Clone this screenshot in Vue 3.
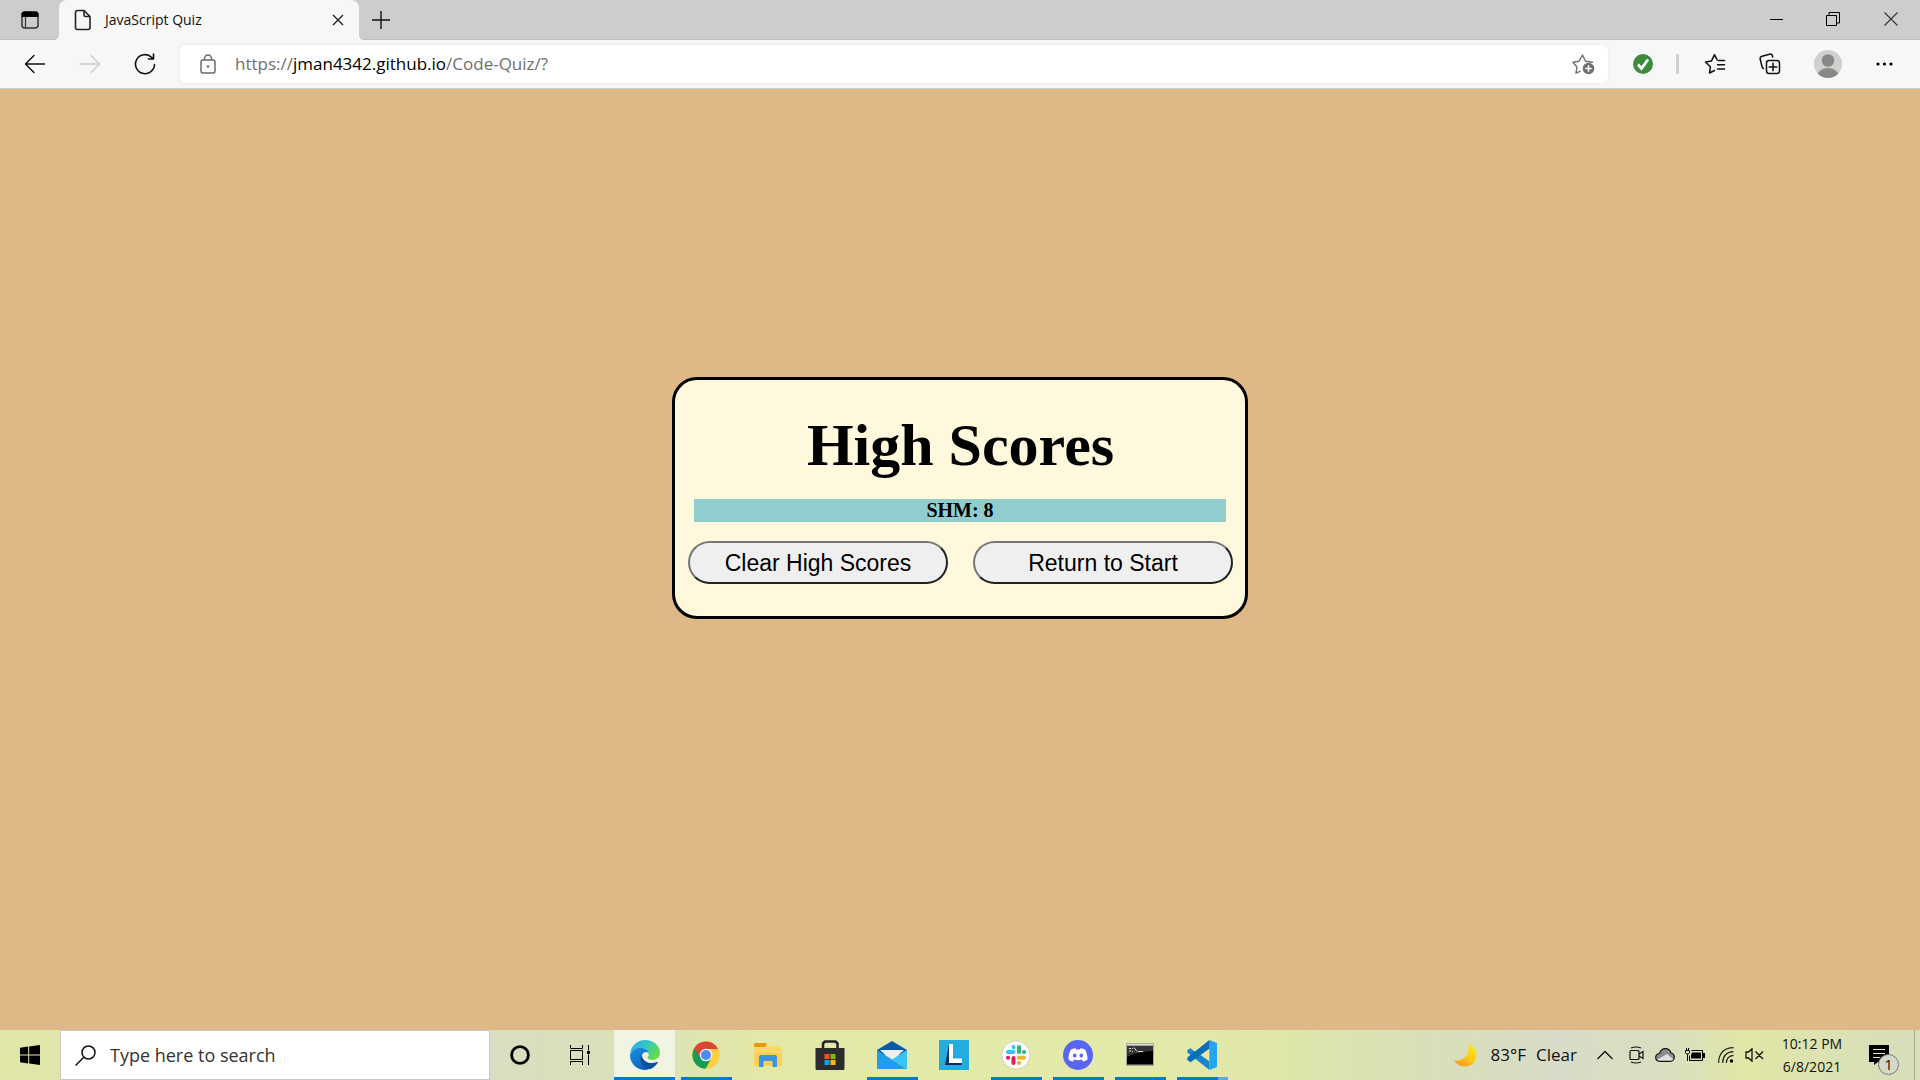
<script setup>
import { ref } from 'vue'

const search = ref('')
const scores = [{ name: 'SHM', score: 8 }]
const apps = [
  { id: 'edge', label: 'Microsoft Edge', state: 'active' },
  { id: 'chrome', label: 'Google Chrome', state: 'open' },
  { id: 'files', label: 'File Explorer', state: '' },
  { id: 'store', label: 'Microsoft Store', state: '' },
  { id: 'mail', label: 'Mail', state: 'open' },
  { id: 'letter', label: 'L', state: '' },
  { id: 'slack', label: 'Slack', state: 'open' },
  { id: 'discord', label: 'Discord', state: 'open' },
  { id: 'cmd', label: 'Command Prompt', state: 'open' },
  { id: 'code', label: 'Visual Studio Code', state: 'open multi' },
]
</script>

<template>
  <div class="desktop">
    <header class="tabstrip">
      <button class="tab-actions" aria-label="Tab actions">
        <svg width="20" height="20" viewBox="0 0 20 20">
          <rect x="2" y="2" width="16" height="16" rx="3" fill="none" stroke="#333" stroke-width="1.5" />
          <path d="M1.500 7V4.500a3 3 0 0 1 3-3h11a3 3 0 0 1 3 3V7z" fill="#000" />
          <path d="M5.500 7v11" stroke="#333" stroke-width="1.200" />
        </svg>
      </button>
      <div class="tab">
        <svg width="18" height="22" viewBox="0 0 18 22" fill="none" stroke="#222" stroke-width="1.600" stroke-linejoin="round">
          <path d="M3.500 1.500h6.500l6 6v11a2 2 0 0 1-2 2H3.500a2 2 0 0 1-2-2v-15a2 2 0 0 1 2-2z" />
          <path d="M10 1.500V6a1.500 1.500 0 0 0 1.500 1.500H16" />
        </svg>
        <span class="tab-title">JavaScript Quiz</span>
        <button class="tab-close" aria-label="Close tab">
          <svg width="12" height="12" viewBox="0 0 12 12" stroke="#222" stroke-width="1.400"><path d="M1 1l10 10M11 1L1 11" /></svg>
        </button>
      </div>
      <button class="new-tab" aria-label="New tab">
        <svg width="18" height="18" viewBox="0 0 18 18" stroke="#111" stroke-width="1.400"><path d="M9 0v18M0 9h18" /></svg>
      </button>
      <div class="window-controls">
        <button class="minimize" aria-label="Minimize"><svg width="14" height="14" viewBox="0 0 14 14"><path d="M0 7.500h13" stroke="#000" /></svg></button>
        <button aria-label="Restore">
          <svg width="14" height="14" viewBox="0 0 14 14" fill="none" stroke="#000"><path d="M.5 3.500h10v10H.5zM3 3.500V.500h10.500V11h-3" /></svg>
        </button>
        <button aria-label="Close"><svg width="14" height="14" viewBox="0 0 14 14" stroke="#333" stroke-width="1.100"><path d="M.5.5l13 13M13.500.500l-13 13" /></svg></button>
      </div>
    </header>

    <nav class="toolbar">
      <button class="nav-button" aria-label="Back">
        <svg width="22" height="20" viewBox="0 0 22 20" fill="none" stroke="#111" stroke-width="1.500" stroke-linecap="round" stroke-linejoin="round"><path d="M20.500 10H1.500M10 1.500L1.500 10l8.500 8.500" /></svg>
      </button>
      <button class="nav-button" aria-label="Forward">
        <svg width="22" height="20" viewBox="0 0 22 20" fill="none" stroke="#ccc" stroke-width="1.500" stroke-linecap="round" stroke-linejoin="round"><path d="M1 10h19.500M12 1.500l8.500 8.500-8.500 8.500" /></svg>
      </button>
      <button class="nav-button" aria-label="Refresh">
        <svg width="22" height="22" viewBox="0 0 22 22" fill="none" stroke="#111" stroke-width="1.600" stroke-linecap="round" stroke-linejoin="round"><path d="M20.500 11.500A9.500 9.500 0 1 1 17.600 4.300L19.500 6M19.500 1v5h-5" /></svg>
      </button>
      <div class="address">
        <svg width="16" height="20" viewBox="0 0 16 20" fill="none" stroke="#6b6b6b" stroke-width="1.500">
          <rect x="1" y="6" width="14" height="13" rx="2" />
          <path d="M4.500 6V4.500a3.500 3.500 0 0 1 7 0V6" />
          <circle cx="8" cy="12.500" r="1.300" fill="#6b6b6b" stroke="none" />
        </svg>
        <a class="url" href="#">https://<b>jman4342.github.io</b>/Code-Quiz/?</a>
        <button aria-label="Add to favorites">
          <svg width="24" height="22" viewBox="0 0 24 22">
            <path d="M8 18.300l-4 1.900 .9-6.200L1 9.200l5.900-.9L10.500 2l3.100 6.300 6.900.9" fill="none" stroke="#707070" stroke-width="1.400" stroke-linejoin="round" stroke-linecap="round" />
            <circle cx="16.500" cy="15.500" r="5.800" fill="#6f6f6f" />
            <path d="M16.500 12.300v6.400M13.300 15.500h6.400" stroke="#fff" stroke-width="1.500" />
          </svg>
        </button>
      </div>
      <div class="tools">
        <button class="tool-extension" aria-label="Extension">
          <svg width="20" height="20" viewBox="0 0 20 20"><circle cx="10" cy="10" r="10" fill="#3d8b3d" /><path d="M5 10.500l3.500 4L15 5.500" fill="none" stroke="#fff" stroke-width="2.800" /></svg>
        </button>
        <span class="separator"></span>
        <button class="tool-favorites" aria-label="Favorites">
          <svg width="22" height="22" viewBox="0 0 22 22" fill="none" stroke="#111" stroke-width="1.500" stroke-linecap="round" stroke-linejoin="round">
            <path d="M10.500 17.500L5.500 20l.9-6.200L1.500 9l5.900-.9L10.500 1.700l2.600 5.100M14.500 7.500h6M13.500 11.800h7M13.500 16h7" />
          </svg>
        </button>
        <button class="tool-collections" aria-label="Collections">
          <svg width="22" height="22" viewBox="0 0 22 22" fill="none" stroke="#111" stroke-width="1.500" stroke-linecap="round">
            <path d="M4.500 15.500a3 3 0 0 1-1.500-2L1.200 6.200a2.500 2.500 0 0 1 1.800-3l7.500-2a2.500 2.500 0 0 1 3 1.800l.2 1" />
            <rect x="7.500" y="7.500" width="13" height="13" rx="2.500" /><path d="M14 10.200v7.600M10.200 14h7.600" />
          </svg>
        </button>
        <button class="tool-profile" aria-label="Profile">
          <svg width="28" height="28" viewBox="0 0 28 28">
            <clipPath id="avatar"><circle cx="14" cy="14" r="14" /></clipPath>
            <g clip-path="url(#avatar)"><path d="M0 0h28v28H0z" fill="#d2d0ce" /><circle cx="14" cy="10.500" r="6.300" fill="#8a8886" /><ellipse cx="14" cy="26" rx="10.500" ry="8" fill="#8a8886" /></g>
          </svg>
        </button>
        <button class="tool-more" aria-label="Settings and more">
          <svg width="17" height="4" viewBox="0 0 17 4"><circle cx="2" cy="2" r="1.600" /><circle cx="8.500" cy="2" r="1.600" /><circle cx="15" cy="2" r="1.600" /></svg>
        </button>
      </div>
    </nav>

    <main class="page">
      <section class="card">
        <h1>High Scores</h1>
        <ul class="scores">
          <li v-for="s in scores" :key="s.name">{{ s.name }}: {{ s.score }}</li>
        </ul>
        <div class="actions">
          <button>Clear High Scores</button>
          <button>Return to Start</button>
        </div>
      </section>
    </main>

    <footer class="taskbar">
      <button class="start" aria-label="Start">
        <svg width="20" height="20" viewBox="0 0 20 20"><path d="M0 2.700L8.200 1.600V9.500H0zM9.200 1.400L20 0v9.500H9.200zM0 10.500h8.200v7.900L0 17.300zM9.200 10.500H20V20L9.200 18.500z" /></svg>
      </button>
      <label class="search">
        <svg width="21" height="21" viewBox="0 0 21 21" fill="none" stroke="#111" stroke-width="1.500"><circle cx="13.500" cy="7.500" r="6.500" /><path d="M9 12L.5 20.500" /></svg>
        <input v-model="search" type="text" placeholder="Type here to search" aria-label="Search" />
      </label>
      <button class="shell" aria-label="Cortana">
        <svg width="20" height="20" viewBox="0 0 20 20"><circle cx="10" cy="10" r="8.400" fill="none" stroke="#000" stroke-width="2.800" /></svg>
      </button>
      <button class="shell" aria-label="Task View">
        <svg width="22" height="20" viewBox="0 0 22 20" fill="none" stroke="#000">
          <path d="M1.500 5.500h12v9h-12zM1.500 0v3.500h12V0M1.500 20v-3.500h12V20M19.500 0v5.500M19.500 9.500V20" /><path d="M18 6h3v3h-3z" fill="#000" stroke="none" />
        </svg>
      </button>

      <button v-for="app in apps" :key="app.id" :class="['app', app.state]" :aria-label="app.label">
        <svg v-if="app.id === 'edge'" width="30" height="30" viewBox="0 0 30 30">
          <defs>
            <linearGradient id="edge-top" x1="0" y1="0" x2="1" y2=".5"><stop offset="0" stop-color="#2aaef0" /><stop offset=".5" stop-color="#2fc4c9" /><stop offset="1" stop-color="#63dc4c" /></linearGradient>
            <linearGradient id="edge-side" x1="0" y1="0" x2=".6" y2="1"><stop offset="0" stop-color="#1a8fe3" /><stop offset="1" stop-color="#0a63bf" /></linearGradient>
          </defs>
          <path d="M.3 13C1.300 5.500 7.500 0 15 0c8.500 0 15 6 15 12.500 0 4.700-3.500 7.500-7.500 7.500-3.300 0-5-1-5-2.200 0-.8 1.300-1.500 1.300-3.600 0-3-3.300-6-8-6C6 8.200 2 10.500.3 13z" fill="url(#edge-top)" />
          <path d="M.1 14.500C1.500 10.500 5.500 8 10.500 8c4.500 0 8.300 2.600 8.300 6-1-2-3-2.300-4.600-1.500C11.500 14 11 17.500 12.500 21c1.500 4 6 6.200 10 5.300C20 29 17.500 30 15 30 6.500 30-.5 23 .1 14.500z" fill="url(#edge-side)" />
          <path d="M11.500 15c-3 6 .5 13.500 8 14.300 4-1.300 6.500-3.800 8.200-6.600.3-.6-.3-1-.9-.7-5.500 2.600-13.500.8-15.300-7z" fill="#0c4f9c" />
        </svg>
        <svg v-else-if="app.id === 'chrome'" width="28" height="28" viewBox="0 0 28 28">
          <circle cx="14" cy="14" r="13.700" fill="#ffcd40" />
          <path d="M14 14L2.100 7.200A13.700 13.700 0 0 0 13.500 27.700L19.500 17z" fill="#169b58" />
          <path d="M14 14L8.600 17.200 2.100 7.200A13.700 13.700 0 0 1 26 8H14z" fill="#db4437" />
          <circle cx="14" cy="14" r="6.300" fill="#f5f5f5" /><circle cx="14" cy="14" r="5" fill="#4c8bf5" />
        </svg>
        <svg v-else-if="app.id === 'files'" width="28" height="24" viewBox="0 0 28 24">
          <path d="M0 2a1 1 0 0 1 1-1h11l2 2h13.500v20H0z" fill="#ffd867" /><path d="M0 1.500A1.500 1.500 0 0 1 1.500 0H12l1 1-2 3H0z" fill="#df9b08" />
          <path d="M0 10h28v13H0z" fill="#ffce52" /><path d="M5 14a2 2 0 0 1 2-2h14a2 2 0 0 1 2 2v10h-4.500v-6h-9v6H5z" fill="#3996dc" />
        </svg>
        <svg v-else-if="app.id === 'store'" width="30" height="30" viewBox="0 0 30 30">
          <path d="M8 10V3.500l2-2h10.500l2 2V10" fill="none" stroke="#222" stroke-width="2.500" stroke-linejoin="round" /><path d="M.5 8h29v20.500A1.500 1.500 0 0 1 28 30H2a1.500 1.500 0 0 1-1.500-1.500z" fill="#2c2c2c" />
          <path d="M9.500 14h5v5h-5z" fill="#f25022" /><path d="M15.500 14h5v5h-5z" fill="#7fba00" /><path d="M9.500 20h5v5h-5z" fill="#00a4ef" /><path d="M15.500 20h5v5h-5z" fill="#ffb900" />
        </svg>
        <svg v-else-if="app.id === 'mail'" width="30" height="28" viewBox="0 0 30 28">
          <path d="M0 9L15 0l15 9v5H0z" fill="#0a5aa8" /><path d="M3 9h24l-12 11z" fill="#f0f0f0" />
          <path d="M0 9l15 9.500L30 28H0z" fill="#1f9fe8" /><path d="M30 9L15 18.500 30 28z" fill="#38c3f5" />
        </svg>
        <svg v-else-if="app.id === 'letter'" width="30" height="30" viewBox="0 0 30 30">
          <path d="M0 0h30v30H0z" fill="#25abdc" /><path d="M10 4.500v18.500h13l-.5 2H6z" fill="#0b2f5e" /><path d="M10 4h4v14.500h9V23H10z" fill="#fff" />
        </svg>
        <svg v-else-if="app.id === 'slack'" width="30" height="30" viewBox="0 0 30 30" stroke-width="4" stroke-linecap="round">
          <circle cx="15" cy="15" r="14.200" fill="#fff" stroke="#c4c7ae" stroke-width=".8" />
          <path d="M12.500 7v.2M7 12h5.500" stroke="#36c5f0" /><path d="M18 7v5M23 12h.2" stroke="#2eb67d" />
          <path d="M7 17.800h.2M12.500 18v5" stroke="#e01e5a" /><path d="M18 17.800h5M18 22.800v.2" stroke="#ecb22e" />
        </svg>
        <svg v-else-if="app.id === 'discord'" width="30" height="30" viewBox="0 0 30 30">
          <circle cx="15" cy="15" r="15" fill="#5865f2" />
          <path d="M12.500 8.200C10.500 8.400 8.800 9 7.800 9.700 6.200 12.500 5.200 16 5.500 19.500c1.500 1.200 3.200 1.900 4.500 2l1.100-1.900c2.500.7 5.300.7 7.800 0l1.100 1.900c1.500-.2 3.200-.9 4.500-2 .2-3.500-.7-7-2.300-9.800-1.300-.8-2.800-1.300-4.700-1.500l-.8 1.300h-3.400z" fill="#fff" />
          <ellipse cx="11.700" cy="15.500" rx="1.800" ry="2" fill="#5865f2" /><ellipse cx="18.300" cy="15.500" rx="1.800" ry="2" fill="#5865f2" />
        </svg>
        <svg v-else-if="app.id === 'cmd'" width="28" height="24" viewBox="0 0 28 24">
          <path d="M0 0h28v23H0z" fill="#a9a9a2" /><path d="M1 3h26v18.500H1z" fill="#000" /><path d="M1 3h26v5Q10 9 1 14z" fill="#343434" /><path d="M1 1h26v1H1z" fill="#d9d9d9" />
          <path d="M3 5.500h2M3 8h2M6.500 5v1M6.500 8v1M8 4.500l3 4M12 8.500h5" stroke="#ddd" fill="none" />
        </svg>
        <svg v-else width="30" height="30" viewBox="0 0 30 30">
          <path d="M22.500 0L9 12.500 3.500 8.300.3 10v2.500L22.500 30V21.500z" fill="#1684cf" /><path d="M22.500 0v8.500L3.500 22.300.3 20v-2.500z" fill="#0a6db5" />
          <path d="M22.500 8.500V21.500L13.500 15z" fill="#e2e9a9" /><path d="M22.500 0L30 3v24l-7.500 3z" fill="#28a4ef" />
        </svg>
      </button>

      <div class="tray">
        <button class="weather">
          <svg width="23" height="23" viewBox="0 0 23 23">
            <defs><linearGradient id="moon" x1="1" y1="0" x2=".3" y2="1"><stop offset="0" stop-color="#ffec00" /><stop offset=".5" stop-color="#ffd21a" /><stop offset="1" stop-color="#f79a1c" /></linearGradient></defs>
            <path d="M14 0c11 4 11 18 2 21.500C9.500 24 3 21 0 16.500 9 18 17 11 14 0z" fill="url(#moon)" />
          </svg>
          <span>83°F</span><span>Clear</span>
        </button>
        <button class="icon-chevron" aria-label="Show hidden icons"><svg width="16" height="10" viewBox="0 0 16 10" fill="none" stroke="#111" stroke-width="1.300"><path d="M.5 9L8 1.500 15.500 9" /></svg></button>
        <button class="icon-meet" aria-label="Meet now">
          <svg width="15" height="18" viewBox="0 0 15 18" fill="none" stroke="#111" stroke-width="1.200"><rect x="1" y="4.500" width="9" height="9" rx="1" /><path d="M10 8l4-2.500v7L10 10M2 2q5-2 10 0M2 16q5 2 10 0" /></svg>
        </button>
        <button class="icon-cloud" aria-label="OneDrive">
          <svg width="20" height="14" viewBox="0 0 20 14"><path d="M5 13.300C2.500 13.300.7 11.800.7 9.500S2.500 5.800 4.500 5.500C5.500 2.500 8 .7 10.500.7c2.700 0 4.800 1.800 5.500 4.300 2 .2 3.300 2 3.300 4.200s-1.800 4.100-4 4.100z" fill="#8d8d8d" /><path d="M2 12l10-6 6.500 5.500-2 1.800H4.500z" fill="#e1e1e1" /><path d="M5 13.300C2.500 13.300.7 11.800.7 9.500S2.500 5.800 4.500 5.500C5.500 2.500 8 .7 10.500.7c2.700 0 4.800 1.800 5.500 4.300 2 .2 3.300 2 3.300 4.200s-1.800 4.100-4 4.100z" fill="none" stroke="#111" stroke-width="1.200" /></svg>
        </button>
        <button class="icon-battery" aria-label="Battery">
          <svg width="20" height="14" viewBox="0 0 20 14"><path d="M6.500 2.500h11v10h-13v-5" fill="none" stroke="#000" /><path d="M7 4.500h9v6H6V7zM18 5h2v5h-2z" /><path d="M.5 2.500h4v2l-1 1.500h-2L.5 4.500zM1.500 0v2.500M3.500 0v2.500M2.500 6v7" stroke="#000" fill="none" /></svg>
        </button>
        <button class="icon-wifi" aria-label="Network">
          <svg width="16" height="16" viewBox="0 0 16 16" fill="none" stroke="#222" stroke-width="1.200"><path d="M.6 16Q1 1 15.500.6M4.600 16Q5 5 15.500 4.600M8.300 16Q8.500 9 15.500 8.300" /><circle cx="13.500" cy="14" r="1.700" fill="#000" stroke="none" /></svg>
        </button>
        <button class="icon-volume" aria-label="Volume muted">
          <svg width="19" height="14" viewBox="0 0 19 14" fill="none" stroke="#111" stroke-width="1.300"><path d="M1 4h2.500L7 .8v12.400L3.500 10H1zM10.500 3.500l7.500 7.500M18 3.500L10.500 11" /></svg>
        </button>
        <button class="clock"><span>10:12 PM</span><span>6/8/2021</span></button>
        <button class="notifications" aria-label="Notifications">
          <svg width="20" height="20" viewBox="0 0 20 20"><path d="M0 0h20v17H9l-4 3v-3H0z" /><path d="M4 4.500h12M4 8.500h12M4 12.500h7" stroke="#e2e6b8" stroke-width="1.200" /></svg>
          <span class="count">1</span>
        </button>
        <button class="show-desktop" aria-label="Show desktop"></button>
      </div>
    </footer>
  </div>
</template>

<style>
body {
  margin: 0;
}
</style>

<style scoped>
.desktop {
  display: flex;
  flex-direction: column;
  min-height: 100vh;
  font-family: "Open Sans", "Noto Sans", sans-serif;
  color: #111;
}
.desktop * {
  box-sizing: border-box;
}
svg {
  display: block;
  flex: none;
}
button {
  display: flex;
  align-items: center;
  justify-content: center;
  flex: none;
  margin: 0;
  padding: 0;
  border: 0;
  background: none;
  font: inherit;
  color: inherit;
}

/* Browser chrome */
.tabstrip {
  display: flex;
  height: 40px;
  background: #cdcdcd;
  box-shadow: inset 0 -1px #bdbdbd;
}
.tab-actions {
  width: 59px;
  height: 40px;
}
.tab {
  position: relative;
  display: flex;
  align-items: center;
  width: 300px;
  height: 40px;
  padding: 0 14px 0 15px;
  border-radius: 8px 8px 0 0;
  background: #f7f7f7;
}
.tab::before,
.tab::after {
  content: "";
  position: absolute;
  bottom: 0;
  width: 5px;
  height: 5px;
}
.tab::before {
  right: 100%;
  background: radial-gradient(circle at 0 0, transparent 5px, #f7f7f7 5px);
}
.tab::after {
  left: 100%;
  background: radial-gradient(circle at 100% 0, transparent 5px, #f7f7f7 5px);
}
.tab-title {
  flex: 1;
  margin-left: 13px;
  font-size: 14px;
  line-height: 20px;
}
.tab-close {
  width: 14px;
  height: 20px;
}
.new-tab {
  width: 44px;
}
.window-controls {
  display: flex;
  margin-left: auto;
}
.window-controls button {
  width: 58px;
  height: 38px;
}
.window-controls .minimize {
  width: 54px;
}
.toolbar {
  display: flex;
  align-items: center;
  height: 49px;
  background: #f7f7f7;
  border-bottom: 1px solid #cfcfcf;
}
.nav-button {
  width: 55px;
  height: 40px;
}
.nav-button:first-child {
  margin-left: 7px;
}
.address {
  display: flex;
  flex: 1;
  align-items: center;
  height: 38px;
  margin-left: 8px;
  padding: 0 12px 0 20px;
  border-radius: 5px;
  background: #fff;
  box-shadow: 0 0 3px #e4e4e4;
}
.url {
  flex: 1;
  margin-left: 19px;
  font-size: 17px;
  line-height: 24px;
  color: #707070;
  text-decoration: none;
}
.url b {
  font-weight: 400;
  color: #000;
}
.tools {
  display: flex;
  align-items: center;
  margin-left: 25px;
}
.separator {
  width: 3px;
  height: 20px;
  margin: 0 25px 0 23px;
  background: #d0d0d0;
}
.tool-collections,
.tool-profile {
  margin-left: 33px;
}
.tool-more {
  margin: 0 27px 0 34px;
}

/* Quiz page */
.page {
  flex: 1;
  padding-top: 288px;
  background: #deb887;
  font-family: "Liberation Serif", serif;
}
.card {
  width: 30%;
  margin: 0 auto;
  padding: 31px 12px 32px 13px;
  border: 3px solid #000;
  border-radius: 25px;
  background: #fff8dc;
  color: #000;
}
h1 {
  margin: 0 0 19px;
  font-size: 60px;
  line-height: 69px;
  text-align: center;
}
.scores {
  margin: 0 7px 19px 6px;
  padding: 0;
  list-style: none;
  font-size: 20px;
  font-weight: 700;
  line-height: 23px;
  text-align: center;
}
.scores li {
  background: #92cdcd;
}
.actions {
  display: flex;
  gap: 25px;
}
.actions button {
  flex: 1;
  height: 43px;
  border: 2px solid;
  border-color: #767676 #212121 #212121 #767676;
  border-radius: 25px;
  background: #efefef;
  font-family: "Liberation Sans", sans-serif;
  font-size: 23px;
  line-height: 26px;
}

/* Taskbar */
.taskbar {
  display: flex;
  height: 50px;
  background: linear-gradient(90deg, #e1e7a8 0%, #d8dec2 25%, #dae0b8 32%, #e2e9a8 40%, #e4eaaa 58%, #e0e7a8 66%, #d8dfba 75%, #d8dcc8 81%, #d9dfc0 87%, #e1e7a4 91%, #dce2b2 95%, #d6deba 100%);
}
.start {
  width: 60px;
}
.search {
  display: flex;
  align-items: center;
  width: 430px;
  padding-left: 14px;
  border: 1px solid #c8c8c8;
  background: #fff;
}
.search input {
  flex: 1;
  min-width: 0;
  margin-left: 14px;
  padding: 0;
  border: 0;
  outline: 0;
  background: none;
  font: inherit;
  font-size: 18px;
  line-height: 24px;
}
.search input::placeholder {
  color: #333;
  opacity: 1;
}
.shell {
  width: 60px;
}
.shell + .app {
  margin-left: 4px;
}
.app {
  width: 62px;
  height: 50px;
}
.active {
  width: 61px;
  background: linear-gradient(#0078d7, #0078d7) bottom / 100% 3px no-repeat, #f1f4e2;
}
.open {
  background: linear-gradient(#0078d7, #0078d7) bottom / 51px 3px no-repeat;
}
.multi {
  background: linear-gradient(90deg, #0078d7 41px, #62a9df 41px) bottom / 51px 3px no-repeat;
}
.tray {
  display: flex;
  align-items: center;
  margin-left: auto;
}
.weather {
  gap: 10px;
  height: 50px;
  font-size: 17px;
  line-height: 24px;
}
.weather span:first-of-type {
  margin-left: 4px;
}
.icon-chevron {
  margin-left: 20px;
}
.icon-meet {
  margin-left: 16px;
}
.icon-cloud {
  margin-left: 11px;
}
.icon-battery {
  margin-left: 10px;
}
.icon-wifi {
  margin-left: 13px;
}
.icon-volume {
  margin-left: 11px;
}
.clock {
  flex-direction: column;
  width: 80px;
  margin-left: 8px;
  font-size: 14px;
  line-height: 23px;
}
.notifications {
  position: relative;
  width: 62px;
  height: 50px;
}
.notifications svg {
  margin-right: 8px;
}
.count {
  position: absolute;
  right: 15px;
  bottom: 5px;
  width: 21px;
  height: 21px;
  border: 1px solid #777;
  border-radius: 50%;
  background: #d5d8c8;
  font-size: 15px;
  line-height: 19px;
  text-align: center;
}
.show-desktop {
  width: 6px;
  height: 50px;
  border-left: 1px solid #a5aa90;
}
</style>
